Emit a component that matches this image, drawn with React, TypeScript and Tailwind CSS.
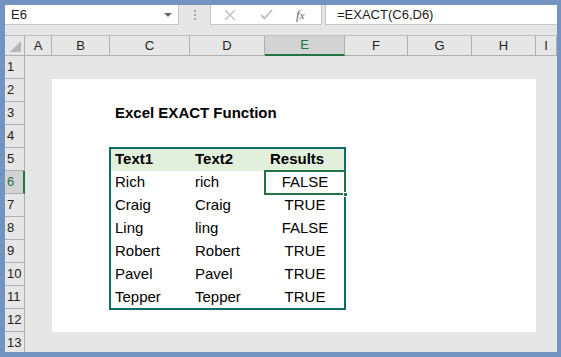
import { ReactNode } from "react";

// Excel window: EXACT function demo sheet, cell E6 selected.

const COLS = ["A", "B", "C", "D", "E", "F", "G", "H", "I"];
const ROWS = [1, 2, 3, 4, 5, 6, 7, 8, 9, 10, 11, 12, 13];

const DATA = [
  ["Rich", "rich", "FALSE"],
  ["Craig", "Craig", "TRUE"],
  ["Ling", "ling", "FALSE"],
  ["Robert", "Robert", "TRUE"],
  ["Pavel", "Pavel", "TRUE"],
  ["Tepper", "Tepper", "TRUE"],
];

const font = "font-['Liberation_Sans',Arial,sans-serif]";

function Cell({ children, className = "" }: { children?: ReactNode; className?: string }) {
  return <div className={`flex h-[23px] items-center ${className}`}>{children}</div>;
}

export default function App() {
  return (
    <div className={`h-[357px] w-[561px] overflow-hidden bg-[#7394c0] pb-[5px] pl-[5px] pr-[4px] pt-[5px] ${font}`}>
      <div className="flex h-full flex-col overflow-hidden bg-[#e6e6e6]">
        {/* formula bar */}
        <div className="flex h-[20px] items-stretch">
          <div className="flex w-[174px] items-center justify-between border-b border-r border-[#c6c6c6] bg-white pl-[6px] pr-[6px] text-[13px] text-[#222]">
            <span>E6</span>
            <span className="h-0 w-0 border-x-[4px] border-t-[4px] border-x-transparent border-t-[#666]" />
          </div>
          <div className="flex w-[31px] flex-col items-center justify-center gap-[2px]">
            <span className="h-[2px] w-[2px] bg-[#a8a8a8]" />
            <span className="h-[2px] w-[2px] bg-[#a8a8a8]" />
            <span className="h-[2px] w-[2px] bg-[#a8a8a8]" />
          </div>
          <div className="flex w-[112px] items-center border-b border-l border-r border-[#c6c6c6] bg-white">
            <svg width="12" height="12" viewBox="0 0 12 12" className="ml-[13px]">
              <path d="M1 1 L11 11 M11 1 L1 11" stroke="#bdbdbd" strokeWidth="1.4" />
            </svg>
            <svg width="13" height="11" viewBox="0 0 13 11" className="ml-[24px]">
              <path d="M1 6 L4.5 9.5 L12 1" stroke="#bdbdbd" strokeWidth="1.8" fill="none" />
            </svg>
            <span className="ml-[23px] font-['Liberation_Serif',serif] text-[13px] italic text-[#666]">
              f<span className="text-[11px]">x</span>
            </span>
          </div>
          <div className="ml-[3px] flex flex-1 items-center border-b border-l border-[#c6c6c6] bg-white pl-[11px] text-[13px] text-[#222]">
            =EXACT(C6,D6)
          </div>
        </div>

        {/* sheet grid */}
        <div className="mt-[10px] grid grid-cols-[20px_27px_58px_80px_75px_80px_63px_64px_64px_21px] grid-rows-[20px_repeat(13,23px)] overflow-hidden border-t border-[#c0c0c0]">
          {/* corner */}
          <div className="col-start-1 row-start-1 flex items-end justify-end border-b border-r border-[#b0b0b0] pb-[3px] pr-[3px]">
            <span className="h-0 w-0 border-b-[11px] border-l-[11px] border-b-[#b6b6b6] border-l-transparent" />
          </div>
          {COLS.map((c, i) => (
            <div
              key={c}
              style={{ gridColumnStart: i + 2 }}
              className={`row-start-1 flex items-center justify-center border-r text-[13px] ${
                c === "E"
                  ? "border-b-2 border-b-[#217346] border-r-[#b0b0b0] bg-[#d3d3d3] text-[#217346]"
                  : "border-b border-b-[#b0b0b0] border-r-[#b0b0b0] text-[#222]"
              }`}
            >
              {c}
            </div>
          ))}
          {ROWS.map((r, i) => (
            <div
              key={r}
              style={{ gridRowStart: i + 2 }}
              className={`col-start-1 flex items-center border-b pl-[2px] text-[13px] ${
                r === 6
                  ? "border-r-2 border-b-[#b0b0b0] border-r-[#217346] bg-[#d3d3d3] text-[#217346]"
                  : "border-r border-b-[#b0b0b0] border-r-[#b0b0b0] text-[#222]"
              }`}
            >
              {r}
            </div>
          ))}

          {/* white print area B2:H12 */}
          <div className="col-start-3 col-end-10 row-start-3 row-end-14 bg-white" />

          {/* title */}
          <div className="col-start-4 col-end-8 row-start-4 flex items-center pl-[5px] text-[15px] font-bold text-black">
            Excel EXACT Function
          </div>

          {/* table C5:E11 */}
          <div className="col-start-4 col-end-7 row-start-6 row-end-13 grid grid-cols-[80px_75px_80px] text-[15px] text-black outline-2 -outline-offset-1 outline-[#0d6b68]">
            <Cell className="bg-[#e2efda] pl-[5px] font-bold">Text1</Cell>
            <Cell className="bg-[#e2efda] pl-[5px] font-bold">Text2</Cell>
            <Cell className="bg-[#e2efda] pl-[5px] font-bold">Results</Cell>
            {DATA.map((row, ri) => (
              <div key={ri} className="contents">
                <Cell className="pl-[5px]">{row[0]}</Cell>
                <Cell className="pl-[5px]">{row[1]}</Cell>
                <Cell
                  className={`relative justify-center ${
                    ri === 0 ? "outline-2 -outline-offset-1 outline-[#217346]" : ""
                  }`}
                >
                  {row[2]}
                  {ri === 0 && (
                    <span className="absolute -bottom-[3px] -right-[3px] h-[5px] w-[5px] border border-white bg-[#217346]" />
                  )}
                </Cell>
              </div>
            ))}
          </div>
        </div>
      </div>
    </div>
  );
}
